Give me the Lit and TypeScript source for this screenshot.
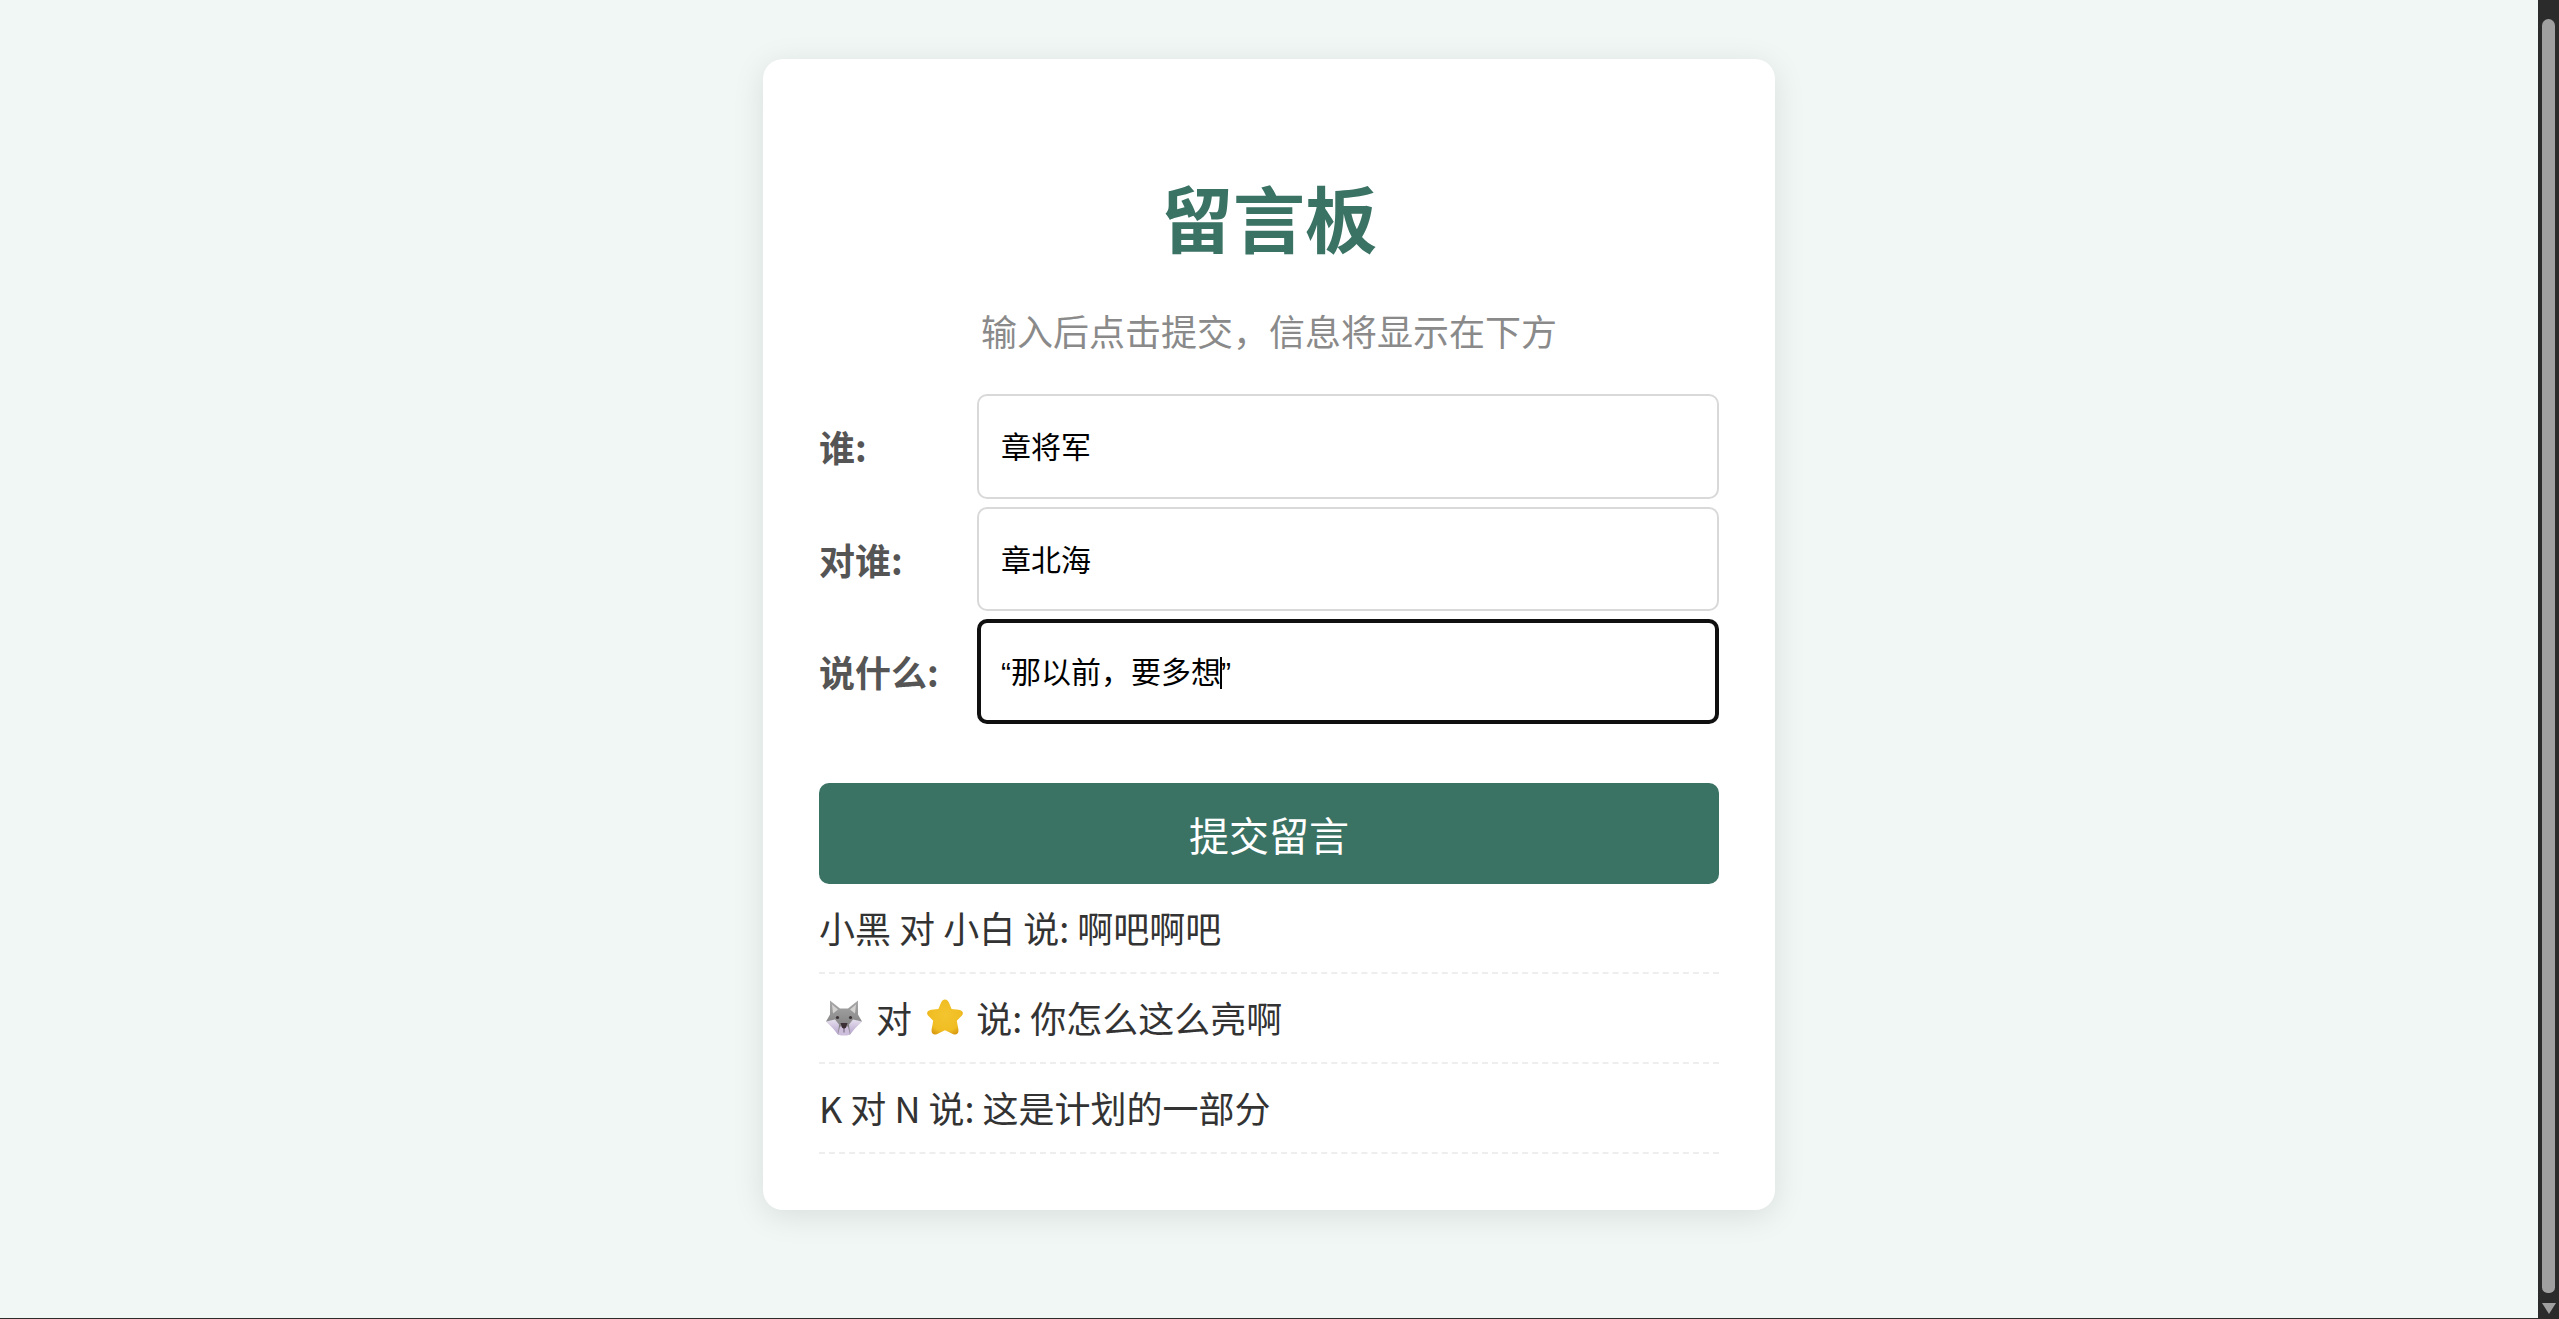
import { LitElement, html, css, svg } from 'lit';
import { customElement } from 'lit/decorators.js';

const wolf = svg`
  <defs>
    <linearGradient id="wolf-fur" x1="0" y1="0" x2="0" y2="1">
      <stop offset="0" stop-color="#a9a9a9" />
      <stop offset="0.6" stop-color="#8b8b8b" />
      <stop offset="1" stop-color="#77737a" />
    </linearGradient>
    <linearGradient id="wolf-cheek" x1="0" y1="0" x2="0" y2="1">
      <stop offset="0" stop-color="#e6e0ee" />
      <stop offset="1" stop-color="#b6a4cc" />
    </linearGradient>
  </defs>
  <path d="M5 1 L15 9 H23 L33 1 L33 15 L37 22 L30 26 L25 35 H13 L8 26 L1 22 L5 15 Z" fill="url(#wolf-fur)" />
  <path d="M7 5 L13 10 L8 14 Z M31 5 L25 10 L30 14 Z" fill="#d4d1d1" />
  <path d="M1 22 L10 20 L14 25 L13 35 L8 29 Z M37 22 L28 20 L24 25 L25 35 L30 29 Z" fill="url(#wolf-cheek)" />
  <path d="M13 35 L15 27 H23 L25 35 L22 36 H16 Z" fill="#cdbfdc" />
  <circle cx="12.5" cy="18" r="1.6" fill="#3a3236" />
  <circle cx="25.5" cy="18" r="1.6" fill="#3a3236" />
  <path d="M15.5 23.5 H22.5 L21 28 L19 29.5 L17 28 Z" fill="#3b2f35" />
  <path d="M19 29 V33" stroke="#6a5a72" stroke-width="1" />
`;

const star = svg`
  <defs>
    <radialGradient id="star-fill" cx="0.5" cy="0.45" r="0.6">
      <stop offset="0" stop-color="#f4c530" />
      <stop offset="0.75" stop-color="#f0bd22" />
      <stop offset="1" stop-color="#d99a10" />
    </radialGradient>
  </defs>
  <path
    d="M18 0.5 C20 0.5 21.2 2 22 3.8 L24.6 10 L31.6 10.8 C35.4 11.4 37 13.8 35 16.4 L29.8 21.8 L31.4 30.4 C32 34.6 29.2 36.6 25.8 35 L18 31.2 L10.2 35 C6.8 36.6 4 34.6 4.6 30.4 L6.2 21.8 L1 16.4 C-1 13.8 0.6 11.4 4.4 10.8 L11.4 10 L14 3.8 C14.8 2 16 0.5 18 0.5 Z"
    fill="url(#star-fill)"
  />
`;

@customElement('app-root')
export class AppRoot extends LitElement {
  static styles = css`
    :host {
      display: flex;
      flex-direction: column;
      height: 100vh;
      background: #f1f7f5;
      font-family: 'Noto Sans CJK SC', sans-serif;
      overflow: hidden;
    }
    .page {
      flex: 1;
      min-height: 0;
      display: flex;
    }
    main {
      flex: 1;
      min-width: 0;
      display: flex;
      justify-content: center;
      align-items: flex-start;
      padding-top: 59px;
    }
    .card {
      box-sizing: border-box;
      width: 1012px;
      height: 1151px;
      padding: 56px;
      background: #fff;
      border-radius: 20px;
      box-shadow: 0 6px 32px rgba(0, 0, 0, 0.1);
    }
    h1 {
      margin: 51px 0 0;
      font-size: 72px;
      line-height: 100px;
      font-weight: 700;
      text-align: center;
      color: #3a7264;
    }
    .sub {
      margin: 39px 0 39px;
      font-size: 36px;
      line-height: 50px;
      text-align: center;
      color: #8a8a8a;
    }
    form {
      display: flex;
      flex-direction: column;
      margin: 0;
    }
    .row {
      display: flex;
      align-items: center;
      height: 104.5px;
      margin-bottom: 8px;
    }
    label {
      width: 158px;
      flex: none;
      font-size: 36px;
      font-weight: 700;
      color: #555;
    }
    .field {
      position: relative;
      flex: 1;
      min-width: 0;
      height: 100%;
    }
    input {
      display: block;
      width: 100%;
      height: 100%;
      box-sizing: border-box;
      padding: 0 22px 2px;
      border: 2px solid #d9d9d9;
      border-radius: 10px;
      background: #fff;
      color: #000;
      font-family: 'Liberation Sans', 'Noto Sans CJK SC', sans-serif;
      font-size: 30px;
      outline: none;
      caret-color: transparent;
    }
    input:focus {
      border-color: transparent;
      outline: 4px solid #101010;
      outline-offset: -4px;
    }
    .caret {
      position: absolute;
      left: 243px;
      top: 38px;
      width: 2px;
      height: 32px;
      background: #000;
    }
    button {
      display: block;
      width: 100%;
      height: 101px;
      margin-top: 51.5px;
      border: none;
      border-radius: 10px;
      background: #3a7264;
      color: #fff;
      font-family: inherit;
      font-size: 40px;
    }
    ul {
      list-style: none;
      margin: 0;
      padding: 0;
    }
    li {
      display: flex;
      align-items: center;
      height: 90px;
      box-sizing: border-box;
      padding-bottom: 2px;
      border-bottom: 2px dashed #eeeeee;
      font-size: 36px;
      color: #333;
      white-space: pre;
    }
    .emoji {
      flex: none;
    }
    .wolf {
      width: 38px;
      height: 37px;
      margin: 0 5px 0 6px;
    }
    .star {
      width: 36px;
      height: 36px;
      margin: 0 5px 0 7px;
    }
    .scrollbar {
      flex: none;
      width: 21px;
      display: flex;
      flex-direction: column;
      align-items: center;
      background: #2b2b2b;
      padding: 19px 0 4px;
      box-sizing: border-box;
    }
    .thumb {
      flex: 1;
      width: 13px;
      border-radius: 7px 7px 6px 6px;
      background: #a0a0a0;
    }
    .arrow {
      flex: none;
      margin-top: 10px;
      width: 0;
      height: 0;
      border-left: 7px solid transparent;
      border-right: 7px solid transparent;
      border-top: 11px solid #a0a0a0;
    }
    .edge {
      flex: none;
      height: 1px;
      background: #2b2b2b;
    }
  `;

  protected firstUpdated() {
    this.renderRoot.querySelector<HTMLInputElement>('#said')?.focus();
  }

  protected render() {
    return html`
      <div class="page">
        <main>
          <section class="card">
            <h1>留言板</h1>
            <p class="sub">输入后点击提交，信息将显示在下方</p>
            <form @submit=${(e: Event) => e.preventDefault()}>
              <div class="row">
                <label for="who">谁:</label>
                <div class="field"><input id="who" type="text" .value=${'章将军'} /></div>
              </div>
              <div class="row">
                <label for="to">对谁:</label>
                <div class="field"><input id="to" type="text" .value=${'章北海'} /></div>
              </div>
              <div class="row">
                <label for="said">说什么:</label>
                <div class="field">
                  <input id="said" type="text" .value=${'“那以前，要多想”'} />
                  <span class="caret"></span>
                </div>
              </div>
              <button type="submit">提交留言</button>
            </form>
            <ul>
              <li>小黑 对 小白 说: 啊吧啊吧</li>
              <li><svg class="emoji wolf" viewBox="0 0 38 36">${wolf}</svg> 对 <svg class="emoji star" viewBox="0 0 36 36">${star}</svg> 说: 你怎么这么亮啊</li>
              <li>K 对 N 说: 这是计划的一部分</li>
            </ul>
          </section>
        </main>
        <div class="scrollbar">
          <div class="thumb"></div>
          <div class="arrow"></div>
        </div>
      </div>
      <div class="edge"></div>
    `;
  }
}
